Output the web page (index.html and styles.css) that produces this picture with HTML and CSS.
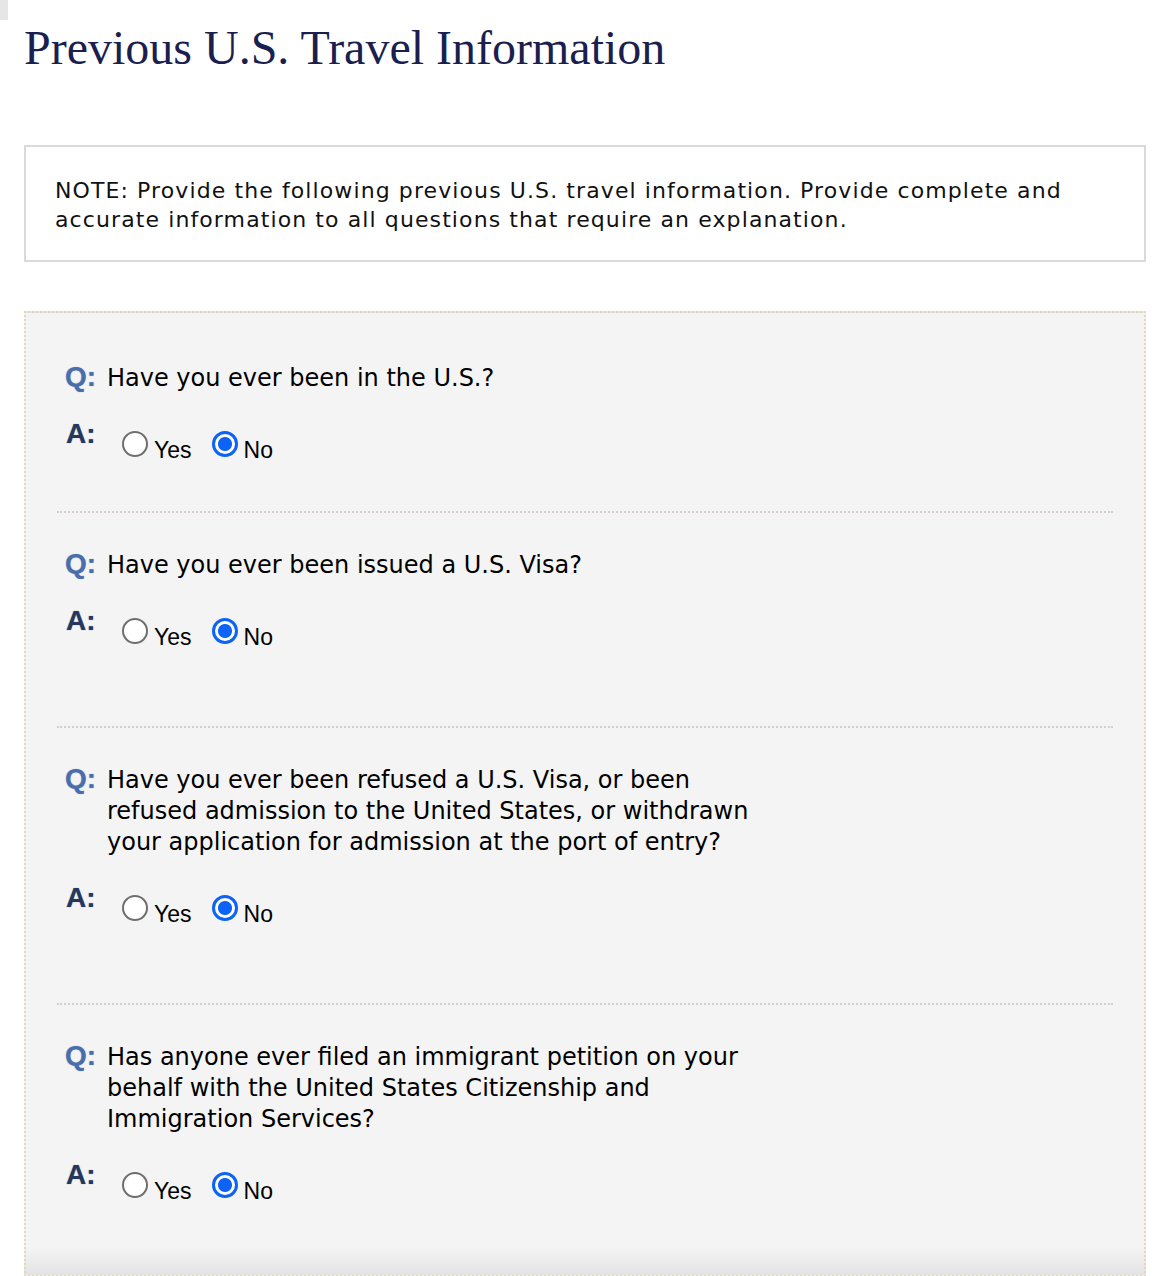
FILE: index.html
```html
<!DOCTYPE html>
<html lang="en">
<head>
<meta charset="utf-8">
<title>Previous U.S. Travel Information</title>
<link rel="stylesheet" href="styles.css">
</head>
<body>
<div class="corner"></div>
<main class="page">
  <h1 class="title">Previous U.S. Travel Information</h1>
  <div class="note">NOTE: Provide the following previous U.S. travel information. Provide complete and accurate information to all questions that require an explanation.</div>
  <div class="qbox">
    <div class="qa first">
      <div class="q"><span class="lbl lbl-q">Q:</span><span class="qtext">Have you ever been in the U.S.?</span></div>
      <div class="a"><span class="lbl lbl-a">A:</span>
        <label class="opt"><input type="radio" name="q1"><span class="opt-text">Yes</span></label>
        <label class="opt"><input type="radio" name="q1" checked><span class="opt-text">No</span></label>
      </div>
    </div>
    <div class="sep"></div>
    <div class="qa">
      <div class="q"><span class="lbl lbl-q">Q:</span><span class="qtext">Have you ever been issued a U.S. Visa?</span></div>
      <div class="a"><span class="lbl lbl-a">A:</span>
        <label class="opt"><input type="radio" name="q2"><span class="opt-text">Yes</span></label>
        <label class="opt"><input type="radio" name="q2" checked><span class="opt-text">No</span></label>
      </div>
    </div>
    <div class="sep"></div>
    <div class="qa">
      <div class="q"><span class="lbl lbl-q">Q:</span><span class="qtext">Have you ever been refused a U.S. Visa, or been refused admission to the United States, or withdrawn your application for admission at the port of entry?</span></div>
      <div class="a"><span class="lbl lbl-a">A:</span>
        <label class="opt"><input type="radio" name="q3"><span class="opt-text">Yes</span></label>
        <label class="opt"><input type="radio" name="q3" checked><span class="opt-text">No</span></label>
      </div>
    </div>
    <div class="sep"></div>
    <div class="qa last">
      <div class="q"><span class="lbl lbl-q">Q:</span><span class="qtext">Has anyone ever filed an immigrant petition on your behalf with the United States Citizenship and Immigration Services?</span></div>
      <div class="a"><span class="lbl lbl-a">A:</span>
        <label class="opt"><input type="radio" name="q4"><span class="opt-text">Yes</span></label>
        <label class="opt"><input type="radio" name="q4" checked><span class="opt-text">No</span></label>
      </div>
    </div>
  </div>
</main>
</body>
</html>
```

FILE: styles.css
```css
html, body {
  margin: 0;
  padding: 0;
  background: #ffffff;
}

.corner {
  width: 8px;
  height: 20px;
  background: #e6e6e6;
}

.page {
  padding: 0 24px;
}

.title {
  margin: 0;
  font-family: "Liberation Serif", "Times New Roman", serif;
  font-weight: normal;
  font-size: 48px;
  line-height: 56px;
  color: #1b1f50;
}

.note {
  margin-top: 69px;
  border: 2px solid #dadada;
  padding: 29px 29px 26px;
  font-family: "DejaVu Sans", Verdana, sans-serif;
  font-size: 22px;
  letter-spacing: 1.1px;
  line-height: 29px;
  color: #111111;
}

.qbox {
  margin-top: 49px;
  border: 2px dotted #e2d6bc;
  background: linear-gradient(to bottom, #f4f4f4 0, #f4f4f4 calc(100% - 28px), #e3e3e3 100%);
}

.qa {
  padding: 35px 39px 76px;
}

.qa.first {
  padding-top: 48px;
  padding-bottom: 48px;
}

.qa.last {
  padding-bottom: 71px;
}

.sep {
  margin: 0 31px;
  border-top: 2px dotted #d6cdcd;
}

.q {
  display: flex;
  align-items: baseline;
}

.lbl {
  flex: 0 0 42px;
  font-family: "Liberation Sans", Arial, sans-serif;
  font-weight: bold;
  font-size: 28px;
}

.lbl-q {
  color: #4a6eab;
  line-height: 31px;
  text-shadow: 0 0 1px rgba(74, 110, 171, 0.6);
}

.lbl-a {
  color: #25375a;
  line-height: 26px;
  margin-top: -10px;
  padding-left: 1px;
  flex-basis: 41px;
  text-shadow: 0 0 1px rgba(37, 55, 90, 0.6);
}

.qtext {
  max-width: 660px;
  font-family: "DejaVu Sans", Verdana, sans-serif;
  font-size: 24px;
  line-height: 31px;
  color: #000000;
}

.a {
  display: flex;
  align-items: flex-start;
  margin-top: 37px;
}

.opt {
  display: flex;
  align-items: flex-start;
  margin-left: 20px;
}

.lbl + .opt {
  margin-left: 15px;
}

.opt input {
  -webkit-appearance: none;
  appearance: none;
  box-sizing: border-box;
  width: 26px;
  height: 26px;
  margin: 0;
  border: 2px solid #6e6e6e;
  border-radius: 50%;
  background: #ffffff;
}

.opt input:checked {
  border: 3px solid #0d63f5;
  background: radial-gradient(circle, #0d63f5 0, #0d63f5 6.5px, #ffffff 7.5px);
}

.opt-text {
  margin-left: 6px;
  padding-top: 6px;
  font-family: "Liberation Sans", Arial, sans-serif;
  font-size: 23px;
  line-height: 26px;
  color: #000000;
}
```
